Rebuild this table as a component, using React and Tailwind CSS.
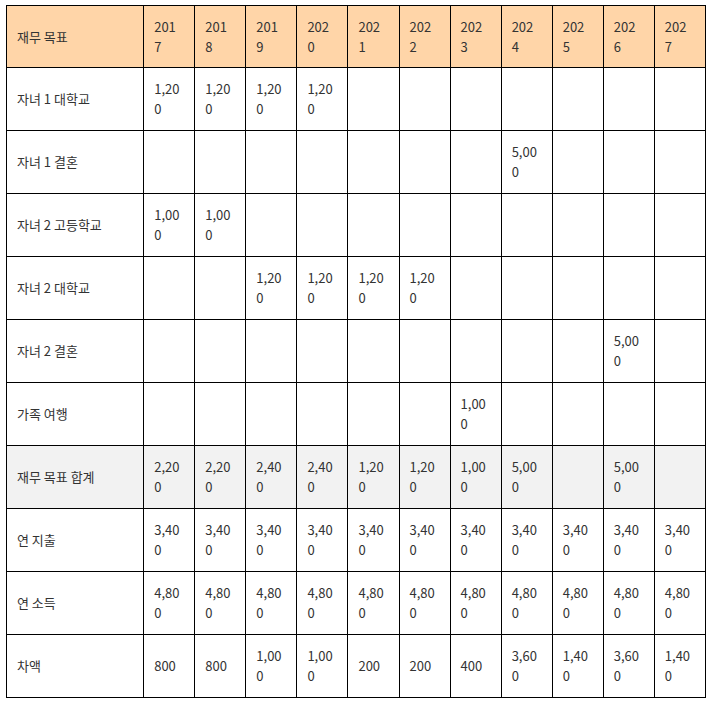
import React from "react";

const years = ["2017", "2018", "2019", "2020", "2021", "2022", "2023", "2024", "2025", "2026", "2027"];

const rows = [
  { label: "자녀 1 대학교", values: ["1,200", "1,200", "1,200", "1,200", "", "", "", "", "", "", ""] },
  { label: "자녀 1 결혼", values: ["", "", "", "", "", "", "", "5,000", "", "", ""] },
  { label: "자녀 2 고등학교", values: ["1,000", "1,000", "", "", "", "", "", "", "", "", ""] },
  { label: "자녀 2 대학교", values: ["", "", "1,200", "1,200", "1,200", "1,200", "", "", "", "", ""] },
  { label: "자녀 2 결혼", values: ["", "", "", "", "", "", "", "", "", "5,000", ""] },
  { label: "가족 여행", values: ["", "", "", "", "", "", "1,000", "", "", "", ""] },
  { label: "재무 목표 합계", values: ["2,200", "2,200", "2,400", "2,400", "1,200", "1,200", "1,000", "5,000", "", "5,000", ""], total: true },
  { label: "연 지출", values: ["3,400", "3,400", "3,400", "3,400", "3,400", "3,400", "3,400", "3,400", "3,400", "3,400", "3,400"] },
  { label: "연 소득", values: ["4,800", "4,800", "4,800", "4,800", "4,800", "4,800", "4,800", "4,800", "4,800", "4,800", "4,800"] },
  { label: "차액", values: ["800", "800", "1,000", "1,000", "200", "200", "400", "3,600", "1,400", "3,600", "1,400"] },
];

const cell = "border border-black pl-[10px] pr-[13px] align-middle text-left break-all";

export default function App() {
  return (
    <div className="bg-white w-[715px] h-[702px] pt-[5px] pl-[6px] font-['Noto_Sans_CJK_KR','Noto_Sans',sans-serif] text-[13px] leading-[20px] text-[#333]">
      <table className="border-collapse table-fixed w-[700px]">
        <colgroup>
          <col className="w-[137px]" />
          {years.map((y) => (
            <col key={y} className="w-[51px]" />
          ))}
        </colgroup>
        <thead>
          <tr className="h-[62px] bg-[#ffd5a8]">
            <th className={`${cell} font-normal`}>재무 목표</th>
            {years.map((y) => (
              <th key={y} className={`${cell} font-normal`}>
                {y}
              </th>
            ))}
          </tr>
        </thead>
        <tbody>
          {rows.map((r) => (
            <tr key={r.label} className={`h-[63px] ${r.total ? "bg-[#f2f2f2]" : "bg-white"}`}>
              <td className={cell}>{r.label}</td>
              {r.values.map((v, i) => (
                <td key={i} className={cell}>
                  {v}
                </td>
              ))}
            </tr>
          ))}
        </tbody>
      </table>
    </div>
  );
}
